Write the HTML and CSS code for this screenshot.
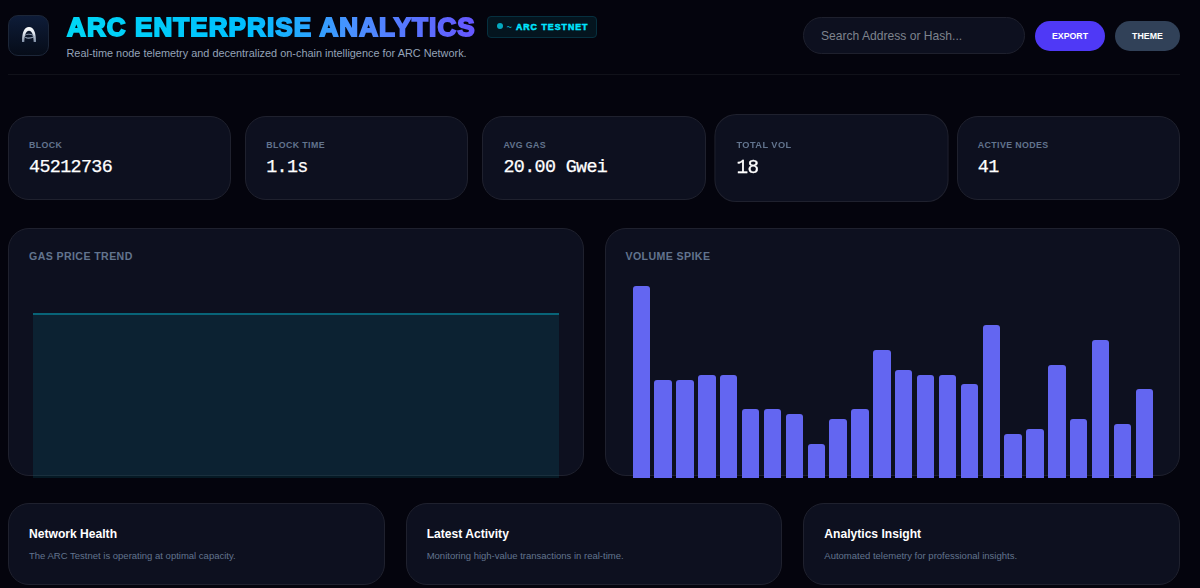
FILE: index.html
```html
<!DOCTYPE html>
<html lang="en">
<head>
    <meta charset="UTF-8">
    <meta name="viewport" content="width=device-width, initial-scale=1.0">
    <title>ARC Enterprise Analytics</title>
    <link rel="stylesheet" href="styles.css">
</head>
<body>
    <header class="header">
        <div class="logo">
            <svg width="14" height="15" viewBox="0 0 14 15" fill="none">
                <defs>
                    <linearGradient id="arch" x1="0" y1="0" x2="0" y2="1">
                        <stop offset="0" stop-color="#ffffff"/>
                        <stop offset="0.4" stop-color="#e2e8f0"/>
                        <stop offset="1" stop-color="#7f8ea5"/>
                    </linearGradient>
                </defs>
                <path d="M0 15C0 5.500 2.200 0 7 0s7 5.500 7 15h-2.300C11.500 8 10 3.800 7 3.800S2.500 8 2.300 15z" fill="url(#arch)"/>
                <path d="M3 8.300C5 6.800 8.500 6.800 11.500 8.500" stroke="#8795aa" stroke-width="1"/>
                <path d="M3.300 10.200C5.500 11.600 9 11.300 12.500 9.500" stroke="#94a3b8" stroke-width="1.200"/>
            </svg>
        </div>
        <div class="brand">
            <div class="title-row">
                <h1>ARC ENTERPRISE ANALYTICS</h1>
                <span class="badge"><i class="dot"></i><span class="tilde">~</span>ARC TESTNET</span>
            </div>
            <p class="subtitle">Real-time node telemetry and decentralized on-chain intelligence for ARC Network.</p>
        </div>
        <div class="actions">
            <input class="search" type="text" placeholder="Search Address or Hash...">
            <button class="btn export">EXPORT</button>
            <button class="btn theme">THEME</button>
        </div>
    </header>

    <section class="stats">
        <div class="card stat">
            <p class="label">BLOCK</p>
            <p class="value">45212736</p>
        </div>
        <div class="card stat">
            <p class="label">BLOCK TIME</p>
            <p class="value">1.1s</p>
        </div>
        <div class="card stat">
            <p class="label">AVG GAS</p>
            <p class="value">20.00 Gwei</p>
        </div>
        <div class="card stat active">
            <p class="label">TOTAL VOL</p>
            <p class="value">18</p>
        </div>
        <div class="card stat">
            <p class="label">ACTIVE NODES</p>
            <p class="value">41</p>
        </div>
    </section>

    <section class="charts">
        <div class="card panel">
            <h3>GAS PRICE TREND</h3>
            <div class="area"></div>
        </div>
        <div class="card panel">
            <h3>VOLUME SPIKE</h3>
            <div class="bars">
                <div class="bar" style="--v: 39"></div>
                <div class="bar" style="--v: 20"></div>
                <div class="bar" style="--v: 20"></div>
                <div class="bar" style="--v: 21"></div>
                <div class="bar" style="--v: 21"></div>
                <div class="bar" style="--v: 14"></div>
                <div class="bar" style="--v: 14"></div>
                <div class="bar" style="--v: 13"></div>
                <div class="bar" style="--v: 7"></div>
                <div class="bar" style="--v: 12"></div>
                <div class="bar" style="--v: 14"></div>
                <div class="bar" style="--v: 26"></div>
                <div class="bar" style="--v: 22"></div>
                <div class="bar" style="--v: 21"></div>
                <div class="bar" style="--v: 21"></div>
                <div class="bar" style="--v: 19"></div>
                <div class="bar" style="--v: 31"></div>
                <div class="bar" style="--v: 9"></div>
                <div class="bar" style="--v: 10"></div>
                <div class="bar" style="--v: 23"></div>
                <div class="bar" style="--v: 12"></div>
                <div class="bar" style="--v: 28"></div>
                <div class="bar" style="--v: 11"></div>
                <div class="bar" style="--v: 18"></div>
            </div>
        </div>
    </section>

    <section class="infos">
        <div class="card info">
            <h4>Network Health</h4>
            <p>The ARC Testnet is operating at optimal capacity.</p>
        </div>
        <div class="card info">
            <h4>Latest Activity</h4>
            <p>Monitoring high-value transactions in real-time.</p>
        </div>
        <div class="card info">
            <h4>Analytics Insight</h4>
            <p>Automated telemetry for professional insights.</p>
        </div>
    </section>
</body>
</html>
```
FILE: styles.css
```css
* {
    box-sizing: border-box;
    margin: 0;
    padding: 0;
}
body {
    height: 588px;
    padding: 0 20px 0 8px;
    overflow: hidden;
    background: #04040d;
    color: #fff;
    font-family: "Liberation Sans", Arial, sans-serif;
}
.header {
    display: flex;
    height: 75px;
    border-bottom: 1px solid #11121a;
}
.logo {
    display: flex;
    align-items: center;
    justify-content: center;
    width: 41px;
    height: 41px;
    margin-top: 15px;
    padding-bottom: 2px;
    border: 1px solid #1c2638;
    border-radius: 10px;
    background: linear-gradient(#0e1c38, #060c18);
}
.brand {
    margin-left: 17px;
    padding-top: 12px;
}
.title-row {
    display: flex;
    align-items: center;
    height: 29px;
}
h1 {
    padding-left: 1px;
    font-size: 26px;
    font-weight: bold;
    letter-spacing: 1.1px;
    line-height: 30px;
    white-space: nowrap;
    background: linear-gradient(90deg, #00d7f5, #00bfff 45%, #4a90ff 70%, #6656ff);
    -webkit-background-clip: text;
    background-clip: text;
    color: transparent;
    -webkit-text-stroke: 1.9px transparent;
}
.badge {
    display: flex;
    align-items: center;
    height: 22px;
    margin-left: 11px;
    padding: 0 8px 0 9px;
    border: 1px solid #06303f;
    border-radius: 4px;
    background: #04151f;
    color: #00e5ff;
    font-size: 8.8px;
    font-weight: bold;
    letter-spacing: 1px;
    white-space: nowrap;
    -webkit-text-stroke: 0.5px currentColor;
}
.dot {
    width: 6px;
    height: 6px;
    margin: 0 4px 1px 0;
    border-radius: 50%;
    background: #05a9c0;
}
.tilde {
    margin-right: 3px;
    color: #05a9c0;
    -webkit-text-stroke: 0;
}
.subtitle {
    margin-top: 5px;
    padding-left: 0.5px;
    color: #94a3b8;
    font-size: 10.9px;
    line-height: 15px;
    white-space: nowrap;
}
.actions {
    display: flex;
    align-items: center;
    gap: 10px;
    height: 37px;
    margin-top: 17px;
    margin-left: auto;
}
.search {
    width: 222px;
    height: 37px;
    padding: 0 17px;
    border: 1px solid #1e202d;
    border-radius: 19px;
    background: #0d101f;
    color: #fff;
    font-family: inherit;
    font-size: 12.1px;
}
.search::placeholder {
    color: #7e838d;
}
.btn {
    height: 30px;
    border: none;
    border-radius: 15px;
    color: #fff;
    font-family: inherit;
    font-size: 8.8px;
    font-weight: bold;
}
.export {
    width: 70px;
    background: #4f39f6;
}
.theme {
    width: 65px;
    background: #314158;
}
.card {
    border: 1px solid #1f212e;
    border-radius: 21px;
    background: #0d101f;
}
.stats {
    display: grid;
    grid-template-columns: repeat(5, 1fr);
    gap: 14px;
    margin-top: 41px;
}
.stat {
    height: 84px;
    padding: 20.5px 20px;
}
.stat.active {
    transform: scale(1.05);
}
.label {
    color: #62748e;
    font-size: 8.8px;
    font-weight: bold;
    letter-spacing: 0.4px;
    line-height: 14px;
}
.value {
    margin-top: 3px;
    font-family: "Liberation Mono", monospace;
    font-size: 18.4px;
    letter-spacing: -0.65px;
    line-height: 25px;
    white-space: pre;
    -webkit-text-stroke: 0.25px #fff;
}
.charts {
    display: grid;
    grid-template-columns: 1fr 1fr;
    gap: 21px;
    margin-top: 28px;
}
.panel {
    height: 248px;
    padding: 20px;
}
.panel h3 {
    color: #62748e;
    font-size: 10.6px;
    letter-spacing: 0.4px;
    line-height: 15px;
}
/* charts run slightly past the bottom edge of their panel */
.area {
    height: 165px;
    margin: 49px 4px 0;
    border-top: 2px solid #086478;
    background: rgba(8, 110, 130, 0.2);
}
.bars {
    display: flex;
    align-items: flex-end;
    gap: 4.4px;
    height: 214px;
    margin: 0 6px 0 7px;
}
.bar {
    flex: 1;
    height: calc(var(--v) * 4.925px);
    border-radius: 3px 3px 0 0;
    background: #6366f1;
}
.infos {
    display: grid;
    grid-template-columns: repeat(3, 1fr);
    gap: 21px;
    margin-top: 27px;
}
.info {
    height: 82px;
    padding: 21px 20px;
}
.info h4 {
    font-size: 12.1px;
    line-height: 18px;
}
.info p {
    margin-top: 6px;
    color: #62748e;
    font-size: 9.5px;
    line-height: 13px;
}
```
